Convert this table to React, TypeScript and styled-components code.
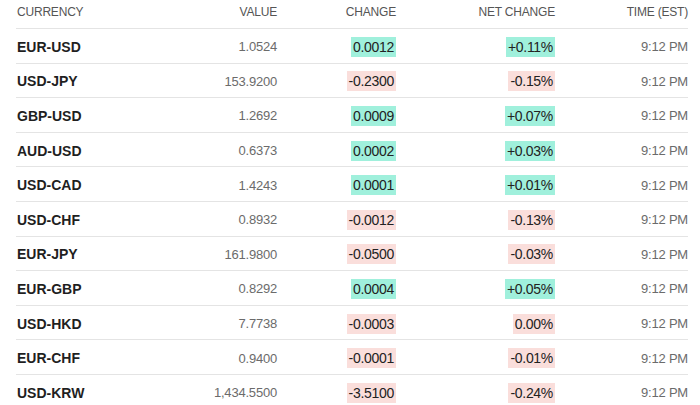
import styled, { createGlobalStyle } from "styled-components";

type Rate = {
  pair: string;
  value: string;
  change: string;
  net: string;
  time: string;
};

const rates: Rate[] = [
  { pair: "EUR-USD", value: "1.0524", change: "0.0012", net: "+0.11%", time: "9:12 PM" },
  { pair: "USD-JPY", value: "153.9200", change: "-0.2300", net: "-0.15%", time: "9:12 PM" },
  { pair: "GBP-USD", value: "1.2692", change: "0.0009", net: "+0.07%", time: "9:12 PM" },
  { pair: "AUD-USD", value: "0.6373", change: "0.0002", net: "+0.03%", time: "9:12 PM" },
  { pair: "USD-CAD", value: "1.4243", change: "0.0001", net: "+0.01%", time: "9:12 PM" },
  { pair: "USD-CHF", value: "0.8932", change: "-0.0012", net: "-0.13%", time: "9:12 PM" },
  { pair: "EUR-JPY", value: "161.9800", change: "-0.0500", net: "-0.03%", time: "9:12 PM" },
  { pair: "EUR-GBP", value: "0.8292", change: "0.0004", net: "+0.05%", time: "9:12 PM" },
  { pair: "USD-HKD", value: "7.7738", change: "-0.0003", net: "0.00%", time: "9:12 PM" },
  { pair: "EUR-CHF", value: "0.9400", change: "-0.0001", net: "-0.01%", time: "9:12 PM" },
  { pair: "USD-KRW", value: "1,434.5500", change: "-3.5100", net: "-0.24%", time: "9:12 PM" },
];

function App() {
  return (
    <>
      <GlobalStyle />
      <Table>
        <HeaderRow>
          <HeadCell>Currency</HeadCell>
          <HeadCell $right>Value</HeadCell>
          <HeadCell $right>Change</HeadCell>
          <HeadCell $right>Net Change</HeadCell>
          <HeadCell $right>Time (EST)</HeadCell>
        </HeaderRow>
        {rates.map((r) => {
          const up = !r.change.startsWith("-");
          return (
            <Row key={r.pair}>
              <Pair>{r.pair}</Pair>
              <Muted>{r.value}</Muted>
              <Cell>
                <Badge $up={up}>{r.change}</Badge>
              </Cell>
              <Cell>
                <Badge $up={up}>{r.net}</Badge>
              </Cell>
              <Muted>{r.time}</Muted>
            </Row>
          );
        })}
      </Table>
    </>
  );
}

const GlobalStyle = createGlobalStyle`
  *, *::before, *::after {
    box-sizing: border-box;
  }
  body {
    margin: 0;
    background: #ffffff;
    font-family: "Liberation Sans", Arial, sans-serif;
  }
`;

const Table = styled.div`
  display: flex;
  flex-direction: column;
  margin: 0 12px 0 16px;
`;

const columns = "144px 117px 119px 159px 133px";

const HeaderRow = styled.div`
  display: grid;
  grid-template-columns: ${columns};
  align-items: center;
  height: 29px;
  padding-bottom: 5px;
  border-bottom: 1px solid #e4e4e4;
`;

const HeadCell = styled.div<{ $right?: boolean }>`
  font-size: 12px;
  color: #555555;
  text-transform: uppercase;
  letter-spacing: -0.2px;
  text-align: ${(p) => (p.$right ? "right" : "left")};
  margin-left: ${(p) => (p.$right ? "0" : "1px")};
`;

const Row = styled.div`
  display: grid;
  grid-template-columns: ${columns};
  align-items: center;
  height: 34.6px;
  padding-top: 2px;
  border-bottom: 1px solid #e4e4e4;
`;

const Cell = styled.div`
  display: flex;
  justify-content: flex-end;
`;

const Pair = styled.div`
  font-size: 14px;
  font-weight: 700;
  color: #1f1f1f;
  padding-left: 1px;
`;

const Muted = styled.div`
  font-size: 13px;
  color: #6b6b6b;
  text-align: right;
  letter-spacing: -0.2px;
`;

const Badge = styled.span<{ $up: boolean }>`
  font-size: 14px;
  color: #222222;
  line-height: 20px;
  padding: 0 2px;
  letter-spacing: -0.3px;
  background: ${(p) => (p.$up ? "#a0f0dc" : "#fadedb")};
`;

export default App;
